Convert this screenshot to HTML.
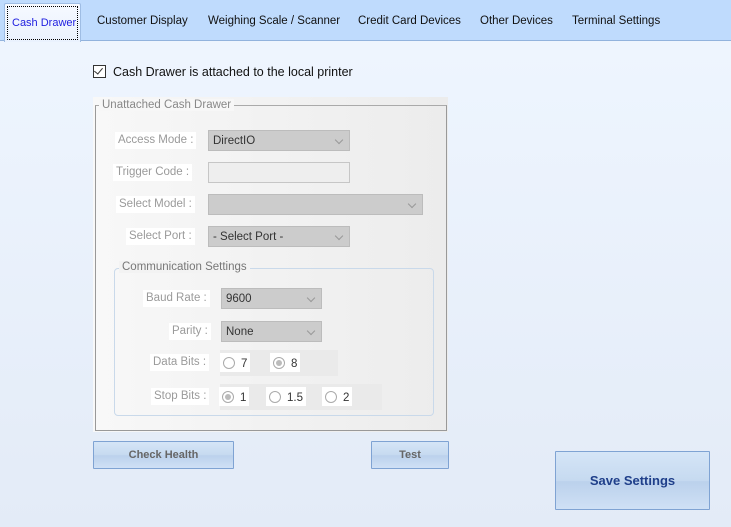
<!DOCTYPE html>
<html><head><meta charset="utf-8"><style>
*{box-sizing:border-box;margin:0;padding:0}
body{width:731px;height:527px;overflow:hidden;font-family:"Liberation Sans",sans-serif;font-size:12px;background:linear-gradient(#eff6ff,#e3ebf7);position:relative;color:#222}
.a{position:absolute;white-space:nowrap}
.tabs{position:absolute;left:0;top:0;width:731px;height:41px;background:#bfdbfd;border-bottom:1px solid #92b3dd}
.tab{position:absolute;top:15px;font-size:11.5px;color:#111}
.act{position:absolute;left:4px;top:3px;width:77px;height:39px;background:linear-gradient(#f6f9ff,#eaf2fe);border:1px solid #9fbde4;border-bottom:none;border-radius:2px 2px 0 0}
.act span{position:absolute;left:2px;top:2px;right:2px;bottom:2px;border:1px dotted #000;color:#2020e0;font-size:11px;padding:10px 0 0 4px;white-space:nowrap;overflow:hidden}
.lbl{position:absolute;color:#9a9a9a;font-size:11.5px;background:#fff;padding:2px 3px 0;height:17px;text-align:right;white-space:nowrap}
.dd{position:absolute;background:#cccccc;border:1px solid #bcbcbc;color:#333;font-size:11.5px;padding:4px 4px 0;white-space:nowrap}
.dd:after{content:"";position:absolute;right:7px;top:6px;width:5px;height:5px;border-right:1px solid #999;border-bottom:1px solid #999;transform:rotate(45deg)}
.rad{display:inline-block;width:12px;height:12px;border:1px solid #aaa;border-radius:50%;background:#fff;vertical-align:-2px;margin-right:6px;position:relative}
.rad.on:after{content:"";position:absolute;left:2px;top:2px;width:6px;height:6px;border-radius:50%;background:#bbb}
.rb{position:absolute;background:#fff;padding:4px 3px 2px;font-size:11.5px;color:#333;white-space:nowrap}
.btn{position:absolute;border:1px solid #7fa3d3;background:linear-gradient(#d5e5f7,#c6daf0 50%,#bbd1ec 52%,#cfe0f5);text-align:center;font-weight:bold;color:#666;font-size:11px;border-radius:1px}
</style></head><body>
<div class="tabs"></div>
<div class="act"><span>Cash Drawer</span></div>
<div class="tab a" style="left:97px">Customer Display</div>
<div class="tab a" style="left:208px">Weighing Scale / Scanner</div>
<div class="tab a" style="left:358px">Credit Card Devices</div>
<div class="tab a" style="left:480px">Other Devices</div>
<div class="tab a" style="left:572px">Terminal Settings</div>

<div class="a" style="left:93px;top:65px;width:13px;height:13px;border:1px solid #333;background:#fff"></div>
<div class="a" style="left:96px;top:66px;width:5px;height:8px;border-right:1.5px solid #333;border-bottom:1.5px solid #333;transform:rotate(40deg)"></div>
<div class="a" style="left:113px;top:65px;font-size:12.5px;color:#111">Cash Drawer is attached to the local printer</div>

<div class="a" style="left:93px;top:97px;width:355px;height:335px;background:linear-gradient(90deg,#f8f8f8,#ececec)"></div>
<div class="a" style="left:95px;top:105px;width:352px;height:326px;border:1px solid #999;border-top-color:#aaa"></div>
<div class="a" style="left:99px;top:99px;background:#f7f7f7;color:#888;font-size:11.5px;padding:0 3px">Unattached Cash Drawer</div>

<div class="lbl" style="left:115px;top:132px">Access Mode :</div>
<div class="dd" style="left:208px;top:130px;width:142px;height:21px">DirectIO</div>
<div class="lbl" style="left:113px;top:164px">Trigger Code :</div>
<div class="a" style="left:208px;top:162px;width:142px;height:21px;background:#eee;border:1px solid #c6c6c6"></div>
<div class="lbl" style="left:116px;top:196px">Select Model :</div>
<div class="dd" style="left:208px;top:194px;width:215px;height:21px"></div>
<div class="lbl" style="left:126px;top:228px">Select Port :</div>
<div class="dd" style="left:208px;top:226px;width:142px;height:21px">- Select Port -</div>

<div class="a" style="left:114px;top:268px;width:320px;height:148px;border:1px solid #c9d9ea;border-radius:4px"></div>
<div class="a" style="left:119px;top:261px;background:#f3f3f3;color:#777;font-size:11.5px;padding:0 3px">Communication Settings</div>

<div class="lbl" style="left:143px;top:290px">Baud Rate :</div>
<div class="dd" style="left:221px;top:288px;width:101px;height:21px">9600</div>
<div class="lbl" style="left:169px;top:323px">Parity :</div>
<div class="dd" style="left:221px;top:321px;width:101px;height:21px">None</div>
<div class="lbl" style="left:150px;top:354px">Data Bits :</div>
<div class="a" style="left:220px;top:350px;width:118px;height:26px;background:#eaeaea"></div>
<div class="rb" style="left:220px;top:353px"><span class="rad"></span>7</div>
<div class="rb" style="left:270px;top:353px"><span class="rad on"></span>8</div>
<div class="lbl" style="left:151px;top:388px">Stop Bits :</div>
<div class="a" style="left:220px;top:384px;width:162px;height:26px;background:#eaeaea"></div>
<div class="rb" style="left:219px;top:387px"><span class="rad on"></span>1</div>
<div class="rb" style="left:266px;top:387px"><span class="rad"></span>1.5</div>
<div class="rb" style="left:322px;top:387px"><span class="rad"></span>2</div>

<div class="btn" style="left:93px;top:441px;width:141px;height:28px;line-height:26px">Check Health</div>
<div class="btn" style="left:371px;top:441px;width:78px;height:28px;line-height:26px">Test</div>
<div class="btn" style="left:555px;top:451px;width:155px;height:59px;line-height:57px;color:#1f3f8a;font-size:13px">Save Settings</div>
</body></html>
